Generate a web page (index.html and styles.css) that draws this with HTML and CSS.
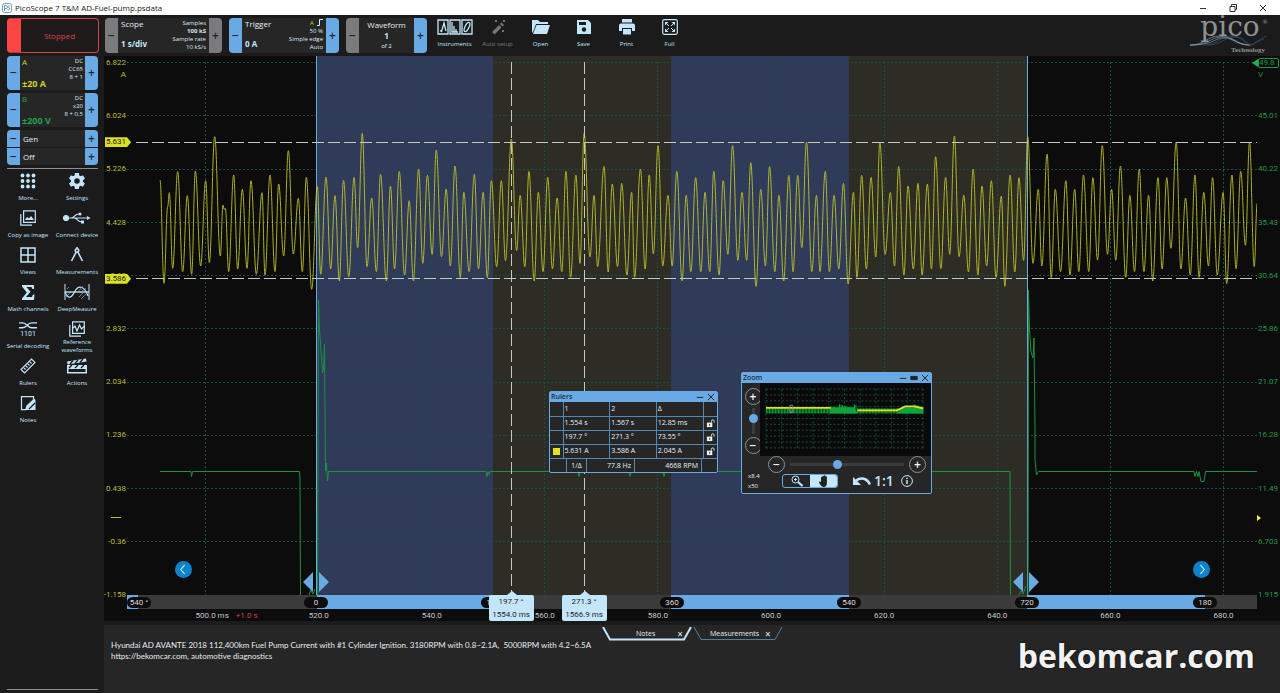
FILE: index.html
```html
<!DOCTYPE html>
<html lang="en">
<head>
    <meta charset="UTF-8">
    <meta name="viewport" content="width=device-width, initial-scale=1.0">
    <title>PicoScope 7 T&amp;M AD-Fuel-pump.psdata</title>
    <link rel="stylesheet" href="styles.css">
</head>
<body>
    <header class="titlebar">
        <svg class="app-icon" viewBox="0 0 12 12" fill="none" stroke="#6f9fc0"><rect x="1.5" y="1.5" width="9" height="9" rx="2"/><path d="M3.5 9V3.500h1.500a1.500 1.500 0 0 1 0 3H3.500M9 4c-2-1-2.500 1-1 1.700s1 2.800-1.500 1.800"/></svg>
        <span class="title">PicoScope 7 T&amp;M AD-Fuel-pump.psdata</span>
        <div class="window-buttons">
            <button aria-label="Minimize"><svg viewBox="0 0 10 10"><path d="M2 5.500h6"/></svg></button>
            <button aria-label="Restore"><svg viewBox="0 0 10 10"><path d="M2 3.500h5v5H2zM3.500 3.500v-2h5v5H7"/></svg></button>
            <button aria-label="Close"><svg viewBox="0 0 10 10"><path d="M2 2l6 6M8 2l-6 6"/></svg></button>
        </div>
    </header>

    <div class="topbar">
        <button class="stopped"><span>Stopped</span></button>
        <div class="card scope">
            <button class="step grey" aria-label="Less time">−</button>
            <div class="card-body">
                <div class="card-main"><span>Scope</span><b>1 s/div</b></div>
                <div class="card-side">Samples<br><b>100 kS</b><br>Sample rate<br>10 kS/s</div>
            </div>
            <button class="step grey" aria-label="More time">+</button>
        </div>
        <div class="card trigger">
            <button class="step" aria-label="Lower trigger">−</button>
            <div class="card-body">
                <div class="card-main"><span>Trigger</span><b>0 A</b></div>
                <div class="card-side"><span class="yellow">A</span> &nbsp;<svg class="edge" viewBox="0 0 6 7"><path d="M0 6.500h2.500v-6H6"/></svg><br>50 %<br>Simple edge<br>Auto</div>
            </div>
            <button class="step" aria-label="Raise trigger">+</button>
        </div>
        <div class="card waveform">
            <button class="step grey" aria-label="Previous waveform">−</button>
            <div class="card-body center"><span>Waveform</span><b>1</b><small>of 2</small></div>
            <button class="step" aria-label="Next waveform">+</button>
        </div>
        <nav class="top-tools">
            <button class="tool"><svg class="wide" viewBox="0 0 36 16"><g fill="none" stroke="#c4e6fb" stroke-width="1.300"><path d="M1 1h10v14H1zM13 1h10v14H13zM25 1h10v14H25z"/><path d="M3 11.500l1.500 1L7 4l2 8M15 3v10h6M17 13V7M19 13v-3"/><ellipse cx="30" cy="8" rx="2" ry="5" transform="rotate(25 30 8)"/></g></svg>Instruments</button>
            <button class="tool" disabled><svg viewBox="0 0 16 16"><path d="M2 13l7-7 2.500 2.500-7 7z" fill="#777"/><path d="M10 5l1.500-1.500L14 6l-1.500 1.500z" fill="#777"/><path d="M5 1l2 2m0-2L5 3M13 1l2 2m0-2l-2 2M12 11l2 2m0-2l-2 2" stroke="#777"/></svg>Auto setup</button>
            <button class="tool"><svg class="big" viewBox="0 0 18 16" fill="#c4e6fb"><path d="M0 14V1h6l2 2h8v2H4L1.500 12z"/><path d="M4.500 6H18l-3 9H1z"/></svg>Open</button>
            <button class="tool"><svg viewBox="0 0 16 16"><path d="M1 1h11l3 3v11H1z" fill="#c4e6fb"/><path d="M3 3h7v3H3z" fill="#1b1b1b"/><circle cx="8" cy="10.500" r="2.200" fill="#1b1b1b"/></svg>Save</button>
            <button class="tool"><svg viewBox="0 0 16 16" fill="#c4e6fb"><path d="M3 0h10v3.500H3zM2 4.500h12a2 2 0 0 1 2 2V12h-3V9H3v3H0V6.500a2 2 0 0 1 2-2z"/><path d="M4 10h8v5.500H4z"/></svg>Print</button>
            <button class="tool"><svg viewBox="0 0 16 16"><rect x=".7" y=".7" width="14.600" height="14.600" rx="1.500" fill="none" stroke="#c4e6fb" stroke-width="1.200"/><path d="M3 3h3.500L3 6.500zM13 3v3.500L9.500 3zM3 13V9.500L6.500 13zM13 13H9.500L13 9.500z" fill="#c4e6fb"/><path d="M4 4l3 3M12 4L9 7M4 12l3-3M12 12L9 9" stroke="#c4e6fb"/></svg>Full</button>
        </nav>
        <div class="logo">
            <span class="logo-name">pico</span><sup>®</sup>
            <svg class="logo-wave" viewBox="0 0 76 12" fill="none" preserveAspectRatio="none">
                <g stroke="#7f99ad" stroke-width=".7"><path d="M0 10c16 0 16-9 30-9s16 9 30 9"/><path d="M0 10c20 0 20-8 32-8s14 8 28 8"/><path d="M0 10c24 0 24-7 34-7s12 7 26 7"/></g>
                <g stroke="#35536c" stroke-width=".7"><path d="M14 10c14 0 16-9 28-9s16 9 18 9 6-3 16-9"/><path d="M18 10c14 0 16-8 26-8s12 8 16 8 6-3 14-6"/></g>
            </svg>
            <span class="logo-sub">Technology</span>
        </div>
    </div>

    <div class="workspace">
        <aside class="sidebar">
            <div class="card channel yellow">
                <button class="step" aria-label="A range down">−</button>
                <div class="card-body">
                    <div class="card-main"><span>A</span><b>±20 A</b></div>
                    <div class="card-side">DC<br>CC65<br>8 + 1</div>
                </div>
                <button class="step" aria-label="A range up">+</button>
            </div>
            <div class="card channel green">
                <button class="step" aria-label="B range down">−</button>
                <div class="card-body">
                    <div class="card-main"><span>B</span><b>±200 V</b></div>
                    <div class="card-side">DC<br>x20<br>8 + 0.5</div>
                </div>
                <button class="step" aria-label="B range up">+</button>
            </div>
            <div class="generator">
                <div class="card"><button class="step" aria-label="Previous generator">−</button><span class="card-body">Gen</span><button class="step" aria-label="Next generator">+</button></div>
                <div class="card"><button class="step" aria-label="Generator off">−</button><span class="card-body">Off</span><button class="step" aria-label="Generator on">+</button></div>
            </div>
            <nav class="side-tools">
                <button class="tool"><svg viewBox="0 0 16 16" fill="#c4e6fb"><circle cx="2.500" cy="2.500" r="1.900"/><circle cx="8" cy="2.500" r="1.900"/><circle cx="13.500" cy="2.500" r="1.900"/><circle cx="2.500" cy="8" r="1.900"/><circle cx="8" cy="8" r="1.900"/><circle cx="13.500" cy="8" r="1.900"/><circle cx="2.500" cy="13.500" r="1.900"/><circle cx="8" cy="13.500" r="1.900"/><circle cx="13.500" cy="13.500" r="1.900"/></svg>More...</button>
                <button class="tool"><svg viewBox="2 2 20 20" fill="#c4e6fb"><path d="M19.400 13c0-.3.100-.6.100-1s0-.7-.1-1l2.200-1.700c.2-.2.200-.4.100-.6l-2-3.500c-.1-.2-.4-.3-.6-.2l-2.600 1c-.5-.4-1.100-.7-1.700-1l-.4-2.700c0-.2-.2-.4-.5-.4h-4c-.2 0-.4.200-.5.400l-.4 2.700c-.6.300-1.200.6-1.700 1l-2.500-1c-.2-.1-.5 0-.6.200l-2 3.500c-.1.200-.1.500.1.600L4.500 11c0 .3-.1.700-.1 1s0 .7.100 1l-2.200 1.700c-.2.200-.2.400-.1.600l2 3.500c.1.200.4.300.6.200l2.500-1c.5.400 1.100.7 1.700 1l.4 2.700c0 .2.200.4.500.4h4c.2 0 .4-.2.500-.4l.4-2.700c.6-.3 1.200-.6 1.700-1l2.500 1c.2.100.5 0 .6-.2l2-3.500c.1-.2.100-.5-.1-.6zM12 15.500a3.500 3.500 0 1 1 0-7 3.500 3.500 0 0 1 0 7z"/></svg>Settings</button>
                <button class="tool"><svg viewBox="0 0 16 16" fill="none" stroke="#c4e6fb" stroke-width="1.200"><path d="M3.600.8h11.700v11.600H3.600zM.8 4v11.200H12"/><path d="M5 10l2-3 2 1.500L11 6l3 4z" fill="#c4e6fb" stroke="none"/></svg>Copy as image</button>
                <button class="tool"><svg class="usb" viewBox="0 0 28 14" fill="none" stroke="#c4e6fb" stroke-width="1.200"><path d="M4 7h20M8 7c4 0 3-4 8-4M11 7c4 0 3 4 8 4"/><circle cx="3" cy="7" r="2.500" fill="#c4e6fb"/><path d="M24 5l3.500 2L24 9z" fill="#c4e6fb" stroke="none"/><circle cx="17" cy="3" r="1.500" fill="#c4e6fb" stroke="none"/><path d="M18 9.500h3v3h-3z" fill="#c4e6fb" stroke="none"/></svg>Connect device</button>
                <button class="tool"><svg viewBox="0 0 16 16" fill="none" stroke="#c4e6fb" stroke-width="1.500"><path d="M1 1h14v14H1zM8 1v14M1 8h14"/></svg>Views</button>
                <button class="tool"><svg viewBox="0 0 16 16" fill="none" stroke="#c4e6fb" stroke-width="1.600"><path d="M7.200 5L2.500 14M8.800 5l4.700 9"/><circle cx="8" cy="3.500" r="1.700"/><path d="M8 0v2"/></svg>Measurements</button>
                <button class="tool"><svg viewBox="0 0 16 16"><path d="M2 1h12v4h-1.500l-1-2H6.500l4 4.700L6 13h6l1-2.500h1.500L14 16H2v-1.500L6.800 8.500 2 2.500z" fill="#c4e6fb"/></svg>Math channels</button>
                <button class="tool"><svg class="wide" viewBox="0 0 26 16" fill="none" stroke="#c4e6fb"><path d="M1 0v16M25 0v16"/><path d="M1 8h24" stroke-width="1.300"/><path d="M1 8c3 7 6 7 9.500 0S20 1 24 12" stroke-width="1.200"/><path d="M2 13l5-5M5 14l6-6M14 8l5-6M16 9l6-5M3 5l2-2M15 13l4-4M17 15l6-6" stroke-width=".5"/></svg>DeepMeasure</button>
                <button class="tool serial"><svg class="big" viewBox="0 0 20 9" fill="none" stroke="#c4e6fb" stroke-width="1.400"><path d="M0 1.500h4c5 0 5 5.500 10 5.500h6M0 7h4c5 0 5-5.500 10-5.500h6"/></svg><i>1101</i>Serial decoding</button>
                <button class="tool two-line"><svg viewBox="0 0 16 16" fill="none" stroke="#c4e6fb" stroke-width="1.200"><path d="M3.600.8h11.700v11.600H3.600zM.8 4v11.200H12"/><path d="M4 7l2-2 2 5 2.500-6 2 4 3-3"/></svg>Reference<br>waveforms</button>
                <button class="tool"><svg viewBox="0 0 16 16" fill="none" stroke="#c4e6fb" stroke-width="1.200"><path d="M1 11.500L11.500 1 15 4.500 4.500 15zM4 10l1.500 1.500M6 8l1.500 1.500M8 6l1.500 1.500M10 4l1.500 1.500"/></svg>Rulers</button>
                <button class="tool"><svg class="wide" viewBox="0 0 22 16"><path d="M1 3.500L20 .5l.5 3L1.500 6.500zM1 7h20v8.500H1z" fill="#c4e6fb"/><path d="M4 6l3-3.500M9 5.500L12 2M14 4.500L17 1M3 10l3-3M9 10l3-3M15 10l3-3" stroke="#1b1b1b" stroke-width="1.400"/><path d="M2.500 11h17v3h-17z" fill="#1b1b1b"/></svg>Actions</button>
                <button class="tool"><svg viewBox="0 0 16 16" fill="none" stroke="#c4e6fb" stroke-width="1.200"><path d="M13.500 4V1.600h-12v13h5"/><path d="M5 15l1.500-4.500L14 3.500l1.500 1.500V15z" fill="#c4e6fb" stroke="none"/><path d="M9 14l6-6" stroke="#1b1b1b"/></svg>Notes</button>
            </nav>
        </aside>

        <main class="plot">
            <div class="axis left" id="axis-a"></div>
            <div class="canvas">
                <svg class="traces" id="traces" viewBox="0 0 1130 539" preserveAspectRatio="none"></svg>
                <button class="round-nav prev" aria-label="Previous"><svg viewBox="0 0 10 10"><path d="M6 1L2.500 5 6 9"/></svg></button>
                <button class="round-nav next" aria-label="Next"><svg viewBox="0 0 10 10"><path d="M4 1l3.500 4L4 9"/></svg></button>
                <svg class="handle start" viewBox="0 0 26 20"><path d="M10 0v20L0 10zM16 0v20l10-10z"/></svg>
                <svg class="handle end" viewBox="0 0 26 20"><path d="M10 0v20L0 10zM16 0v20l10-10z"/></svg>
            </div>
            <div class="axis right" id="axis-b"></div>
            <div class="degrees" id="degrees"></div>
            <div class="times" id="times"></div>

            <section class="panel rulers">
                <div class="panel-head"><span>Rulers</span><button aria-label="Minimize rulers"><svg viewBox="0 0 10 10"><path d="M1 5.500h8"/></svg></button><button aria-label="Close rulers"><svg viewBox="0 0 10 10"><path d="M1 1l8 8M9 1L1 9"/></svg></button></div>
                <table>
                    <tr><th></th><th>1</th><th>2</th><th>Δ</th><th></th></tr>
                    <tr><td></td><td>1.554 s</td><td>1.567 s</td><td>12.85 ms</td><td class="lock"></td></tr>
                    <tr><td></td><td>197.7 °</td><td>271.3 °</td><td>73.55 °</td><td class="lock"></td></tr>
                    <tr><td><i class="swatch"></i></td><td>5.631 A</td><td>3.586 A</td><td>2.045 A</td><td class="lock"></td></tr>
                </table>
                <div class="inverse"><span>1/Δ</span><span>77.8 Hz</span><span>4668 RPM</span></div>
            </section>

            <section class="panel zoom">
                <div class="panel-head"><span>Zoom</span><button aria-label="Minimize zoom"><svg viewBox="0 0 10 10"><path d="M1 5.500h8"/></svg></button><button aria-label="Dock zoom"><svg viewBox="0 0 10 10"><path d="M1 3h8v4H1z" fill="#222"/></svg></button><button aria-label="Close zoom"><svg viewBox="0 0 10 10"><path d="M1 1l8 8M9 1L1 9"/></svg></button></div>
                <div class="zoom-body">
                    <div class="zoom-v">
                        <button class="ring" aria-label="Zoom in vertically">+</button>
                        <input type="range" class="vertical" aria-label="Vertical zoom" min="0" max="100" value="65">
                        <button class="ring" aria-label="Zoom out vertically">−</button>
                    </div>
                    <svg class="overview" id="overview" viewBox="0 0 172 72" preserveAspectRatio="none"></svg>
                </div>
                <div class="zoom-foot">
                    <div class="factors">x8.4<br>x50</div>
                    <div class="zoom-controls">
                        <div class="zoom-h">
                            <button class="ring" aria-label="Zoom out">−</button>
                            <input type="range" aria-label="Horizontal zoom" min="0" max="100" value="41">
                            <button class="ring" aria-label="Zoom in">+</button>
                        </div>
                        <div class="zoom-modes">
                            <div class="segmented">
                                <button aria-label="Marquee zoom"><svg viewBox="0 0 12 12" fill="none" stroke="#c4e6fb"><circle cx="4.500" cy="4.500" r="3.500"/><path d="M7 7l4.500 4" stroke-width="2"/><path d="M3 4.500h3M4.500 3v3"/></svg></button>
                                <button class="active" aria-label="Pan"><svg viewBox="0 0 12 12"><path d="M3 7V2.500a.7.700 0 0 1 1.400 0V1.500a.7.700 0 0 1 1.500 0V1a.7.700 0 0 1 1.500 0v1a.7.700 0 0 1 1.500 0V8c0 2-1 4-3 4S3 11 1 7.500C.5 6.500 2 6 3 7z" fill="#222"/></svg></button>
                            </div>
                            <button class="plain" aria-label="Undo zoom"><svg class="undo" viewBox="0 0 18 10"><path d="M3 4.500C8 1 14 2 17 8.500" fill="none" stroke="#c4e6fb" stroke-width="2.500"/><path d="M0 1v8h8z" fill="#c4e6fb"/></svg></button>
                            <button class="plain one">1:1</button>
                            <button class="plain" aria-label="Information"><svg class="info" viewBox="0 0 12 12" fill="none" stroke="#c4e6fb"><circle cx="6" cy="6" r="5.400"/><path d="M6 5v4M6 2.800v1.200" stroke-width="1.500"/></svg></button>
                        </div>
                    </div>
                </div>
            </section>
        </main>

        <section class="notes">
            <div class="tabs">
                <div class="tab active"><svg viewBox="0 0 90 14"><path d="M1 0l7 12.500h74L89 0"/></svg><button>Notes</button><button class="tab-close" aria-label="Close notes">×</button></div>
                <div class="tab"><svg viewBox="0 0 90 14"><path d="M1 0l7 12.500h74L89 0"/></svg><button>Measurements</button><button class="tab-close" aria-label="Close measurements">×</button></div>
            </div>
            <div class="notes-row">
                <p>Hyundai AD AVANTE 2018 112,400km Fuel Pump Current with #1 Cylinder Ignition. 3180RPM with 0.8~2.1A,&nbsp; 5000RPM with 4.2~6.5A<br>https://bekomcar.com, automotive diagnostics</p>
                <span class="watermark">bekomcar.com</span>
            </div>
        </section>
    </div>
    <script src="script.js"></script>
</body>
</html>
```
FILE: styles.css
```css
* { box-sizing: border-box; }
html, body { height: 100%; }
body { margin: 0; background: #1b1b1b; color: #e4eef4; font: 8px/10px "Open Sans", "Noto Sans", sans-serif; display: flex; flex-direction: column; overflow: hidden; }
button { font: inherit; color: inherit; background: none; border: 0; padding: 0; margin: 0; }
svg { display: block; }
.yellow { color: #d0d42a; }
.green { color: #22a04a; }

.titlebar { flex: none; height: 15px; background: #fff; color: #222; display: flex; align-items: center; padding-left: 1px; }
.app-icon { width: 12px; height: 12px; margin-right: 2px; }
.window-buttons { margin-left: auto; display: flex; padding-right: 2px; }
.window-buttons button { width: 30px; display: flex; justify-content: center; }
.window-buttons svg { width: 10px; height: 10px; fill: none; stroke: #333; stroke-width: 1; }

.topbar { flex: none; height: 41px; display: flex; align-items: flex-start; padding: 3px 10px 0 7px; }
.stopped { width: 92px; height: 35px; border: 1px solid #d84448; border-radius: 4px; background: #1e1a1a; color: #d84448; border-left: 14px solid #fb4444; margin-right: 6px; }
.card { display: flex; background: #262626; border-radius: 4px; overflow: hidden; }
.topbar .card { height: 35px; margin-right: 7px; }
.scope { width: 117px; }
.topbar .trigger { width: 110px; }
.waveform { width: 81px; }
.step { flex: none; width: 13px; background: #6aaae4; color: #1a2a3a; font-size: 12px; font-weight: 600; line-height: 12px; }
.step.grey { background: #7b7b7d; color: #222; }
.card-body { flex: 1; display: flex; justify-content: space-between; padding: 0 3px; }
.card-main { display: flex; flex-direction: column; justify-content: space-between; padding: 1px 0 4px; white-space: nowrap; }
.card-main b { font-size: 9px; }
.topbar .card-main b { font-size: 8px; color: #c4e6fb; }
.card-side { font-size: 6px; line-height: 8px; text-align: right; padding-top: 1px; white-space: nowrap; color: #dceaf2; }
.edge { display: inline-block; width: 6px; height: 7px; fill: none; stroke: #dceaf2; vertical-align: -1px; }
.card-body.center { flex-direction: column; align-items: center; padding: 2px 0; }
.center b { color: #c4e6fb; }
.center small { font-size: 6px; }
.tool { font-size: 6px; line-height: 8px; color: #c4e6fb; display: flex; flex-direction: column; align-items: center; white-space: nowrap; }
.tool svg { height: 16px; width: 16px; margin-bottom: 5px; }
.tool svg.wide { width: auto; }
.tool svg.big { width: 18px; }
.tool:disabled { color: #7c7c7c; }
.top-tools { display: flex; padding-top: 1px; margin-left: -1px; }
.top-tools .tool { width: 43px; }

.logo { margin-left: auto; width: 80px; height: 36px; position: relative; color: #8f9193; font-family: "DejaVu Serif", serif; text-align: center; }
.logo-name { font-size: 28px; line-height: 18px; }
.logo sup { font-size: 6px; position: absolute; right: 2px; top: 0; line-height: 8px; }
.logo-wave { position: absolute; left: 0; top: 17px; width: 76px; height: 12px; }
.logo-sub { position: absolute; right: 5px; bottom: 0; font: bold 7px/8px "Liberation Serif", serif; }

.workspace { flex: 1; min-height: 0; display: grid; grid-template-columns: 104px 1fr; grid-template-rows: 1fr 68px; }
.sidebar { grid-row: span 2; padding: 0 6px 3px 7px; display: flex; flex-direction: column; gap: 3px; }
.channel { height: 34px; }
.channel .card-body, .channel .card-side { padding-right: 1px; }
.channel .card-body { padding-left: 2px; }
.channel .card-main { padding-bottom: 1px; }
.generator { display: flex; flex-direction: column; gap: 1px; border-radius: 4px; overflow: hidden; }
.generator .card { height: 17px; border-radius: 0; align-items: stretch; }
.generator .card-body { align-items: center; }
.side-tools { flex: 1; border-top: 1px solid #909090; border-bottom: 1px solid #909090; display: grid; grid-template-columns: 49px 49px; grid-auto-rows: 37px; justify-content: center; padding-top: 4px; }
.side-tools .tool svg.usb { width: 28px; }
.side-tools .serial svg { height: 9px; margin-bottom: 0; }
.side-tools .two-line svg { margin-bottom: 1px; }
.serial i { font: 7px/8px Roboto, sans-serif; margin-bottom: 4px; }

.plot { position: relative; background: #0c0c0c; display: grid; grid-template-columns: 23px 1fr 23px; grid-template-rows: 1fr 14px 12px; border-bottom: 4px solid #1b1b1b; font: 8px/8px Roboto, sans-serif; }
.axis { position: relative; grid-row: 1; display: flex; flex-direction: column; justify-content: space-between; padding-top: 3px; margin-bottom: -4px; z-index: 1; }
.left { color: #b9bd35; align-items: flex-end; padding-right: 1px; }
.right { color: #1f9a46; padding-left: 1px; grid-column: 3; }
.axis .unit { position: absolute; top: 15px; }
.axis .flag { position: absolute; left: 1px; height: 10px; line-height: 10px; padding: 0 5px 0 1px; background: #dbe224; color: #222; transform: translateY(-5px); clip-path: polygon(0 0, 84% 0, 100% 50%, 84% 100%, 0 100%); }
.axis .boxed { border: 1px solid #1f9a46; border-radius: 2px; margin: -1px 1px -1px 0; }
.axis .boxed::before { content: ""; position: absolute; left: -5px; top: 3px; border: 4px solid transparent; border-right: 6px solid #22b04e; border-left: 0; }
.zero { position: absolute; top: 84%; }
.left .zero { left: 7px; width: 10px; height: 1px; background: #b9bd35; margin-top: 5px; }
.right .zero { left: 0; border: 3px solid transparent; border-left: 4px solid #f2f22c; border-right: 0; margin-top: 3px; }
.canvas { position: relative; grid-column: 2; min-height: 0; }
.traces { position: absolute; width: 100%; height: 100%; }
.traces path, .traces line { fill: none; vector-effect: non-scaling-stroke; }
.band-blue { fill: #303b59; }
.band-olive { fill: #2d2d26; }
.traces .grid { stroke: #1d4d4b; stroke-dasharray: 2 2; }
.traces .marker { stroke: #6aaae4; }
.traces .ruler { stroke: #c4c8c0; stroke-dasharray: 12 4; }
.traces .trace-a { stroke: #c8cc27; stroke-width: 1; opacity: .85; }
.traces .trace-b { stroke: #1c9140; }
.round-nav { position: absolute; bottom: 17px; width: 17px; height: 17px; border-radius: 50%; background: #0c84cc; display: flex; align-items: center; justify-content: center; }
.round-nav svg { width: 11px; height: 11px; fill: none; stroke: #d5ecfa; }
.prev { left: 48px; }
.next { right: 47px; }
.handle { position: absolute; bottom: 3px; width: 26px; height: 20px; fill: #6aaae4; transform: translateX(-13px); }
.handle.start { left: 16.7%; }
.handle.end { left: 79.6%; }
.degrees { grid-column: 2; position: relative; background: #3b3b3b; color: #ddd; }
.degrees .bar { position: absolute; top: 0; bottom: 0; background: #6aaae4; }
.degrees .pill { position: absolute; top: 2px; width: 24px; height: 11px; line-height: 11px; border-radius: 6px; background: #0c0c0c; text-align: center; transform: translateX(-12px); }
.times { grid-column: 2; position: relative; color: #c5c9cc; line-height: 12px; }
.times span { position: absolute; top: 1px; white-space: nowrap; transform: translateX(-10px); }
.times em { font-style: normal; color: #c94444; margin-left: 7px; }
.times .callout { top: -14px; width: 45px; height: 26px; line-height: 13px; background: #c4e6fb; color: #223; text-align: center; border-radius: 2px; transform: translateX(-23px); }
.callout::before { content: ""; position: absolute; left: 18px; top: -4px; border: 5px solid transparent; border-bottom: 4px solid #c4e6fb; border-top: 0; }

.panel { position: absolute; z-index: 2; background: #262626; border: 1px solid #6aaae4; border-radius: 2px; font: 7px/10px "Open Sans", sans-serif; color: #e8f2f8; }
.panel-head { height: 10px; background: #6aaae4; color: #1c2c3c; display: flex; align-items: center; font-weight: 600; padding: 0 1px; }
.panel-head span { flex: 1; }
.panel-head button { width: 11px; }
.panel-head svg { width: 8px; height: 8px; fill: none; stroke: #222; stroke-width: 1.2; margin: auto; }
.rulers { left: 445px; top: 335px; width: 169px; }
.rulers table { border-collapse: collapse; width: 100%; table-layout: fixed; }
.rulers th, .rulers td { border: 1px solid #5688b4; border-top: 0; height: 14px; padding: 0 1px; text-align: left; font-weight: 400; }
.rulers th:last-child, .rulers td:last-child { border-right: 0; width: 14px; }
.rulers th:first-child, .rulers td:first-child { border-left: 0; width: 13px; }
.swatch { display: block; width: 7px; height: 7px; background: #e2e222; margin: 0 auto; }
.lock svg { width: 9px; height: 9px; margin: auto; }
.inverse { display: flex; width: 136px; margin-left: 16px; border: 1px solid #5688b4; border-top: 0; border-bottom: 0; line-height: 13px; }
.inverse span { width: 48px; text-align: right; padding-right: 3px; border-left: 1px solid #5688b4; }
.inverse span:first-child { width: 19px; border: 0; text-align: center; padding: 0; }
.inverse span:last-child { flex: 1; }
.zoom { left: 637px; top: 316px; width: 191px; }
.zoom-body { display: flex; height: 73px; }
.zoom-v { width: 18px; flex: none; display: flex; flex-direction: column; align-items: center; justify-content: space-between; padding: 5px 0 2px; margin-left: 2px; }
.overview { flex: 1; min-width: 0; height: 73px; background: #0a0a0a; margin-left: -2px; }
.ring { flex: none; width: 17px; height: 17px; border: 1px solid #8b9298; border-radius: 50%; font-size: 12px; font-weight: 600; line-height: 14px; text-align: center; color: #fff; }
.zoom input { appearance: none; background: #3c3c3c; height: 3px; flex: 1; width: 0; min-width: 0; margin: 0 5px; }
.zoom input.vertical { writing-mode: vertical-lr; direction: rtl; width: 3px; height: auto; min-height: 0; margin: 3px 0; }
.zoom input::-webkit-slider-thumb { appearance: none; width: 9px; height: 9px; border-radius: 50%; background: #6aaae4; }
.zoom-foot { display: flex; height: 37px; }
.factors { width: 26px; flex: none; padding: 15px 0 0 6px; font-size: 6px; }
.zoom-controls { flex: 1; min-width: 0; padding-right: 5px; }
.zoom-h { display: flex; align-items: center; }
.zoom-modes { display: flex; align-items: center; padding-left: 14px; height: 16px; }
.segmented { display: flex; width: 56px; height: 14px; border: 1px solid #6aaae4; border-radius: 3px; overflow: hidden; margin-right: 15px; }
.segmented button { flex: 1; }
.segmented svg { width: 12px; height: 12px; margin: auto; }
.segmented .active { background: #c4e6fb; }
.undo { width: 18px; height: 10px; }
.plain.one { font-size: 14px; font-weight: 600; color: #c4e6fb; line-height: 14px; margin: 0 7px 0 3px; }
.info { width: 12px; height: 12px; }

.notes { background: #262626; position: relative; }
.tabs { display: flex; padding: 2px 0 0 498px; gap: 1px; font-size: 7px; }
.tab { position: relative; width: 90px; height: 14px; display: flex; padding-left: 17px; gap: 6px; }
.tab.active { padding-left: 34px; gap: 22px; }
.tab button { position: relative; }
.tab svg { position: absolute; left: 0; top: 0; width: 90px; height: 14px; fill: none; stroke: #50809f; }
.tab.active svg { stroke: #c4e6fb; stroke-width: 2; }
.tab-close { font-size: 10px; }
.notes-row { display: flex; justify-content: space-between; padding: 0 25px 0 7px; font-size: 8px; line-height: 11px; }
.notes p { margin: -1px 0 0; white-space: nowrap; font-family: Lato, "Open Sans", sans-serif; }
.watermark { font-size: 32px; font-weight: 700; line-height: 30px; color: #f2f2f2; text-shadow: 0 0 2px #000; }
```
FILE: script.js
```js
// full-scale readings for both axes, top to bottom
var axisA = ['6.822', '6.024', '5.226', '4.428', '3.63', '2.832', '2.034', '1.236', '0.438', '-0.36', '-1.158'];
var axisB = ['49.8', '45.01', '40.22', '35.43', '30.64', '25.86', '21.07', '16.28', '11.49', '6.703', '1.915'];

var current = [
    { x: -27, y: 44, sx: 1 / 3, pts: '180,240 192,550 203,320 208,278 218,505 233,215 248,515 262,287 275,523 286,213 302,498 317,242 328,488 344,110 361,468 369,315 372,328 376,325 386,515 401,225 413,507 427,268 441,505 453,242 469,523 486,278 495,525 510,225 525,515 536,252 551,468 565,152 580,462 595,295 607,515 619,232 635,568 652,260 662,523 678,232 692,507 705,287 718,543' },
    { x: 213, y: 64, sx: 0.5868, pts: '6,181 15,470 24,172 30,383 38,40 46,440 54,234 62,455 69,163 79,483 86,198 93,447 101,154 110,465 118,242 125,483 134,147 141,430 149,166 157,403 164,90 173,410 181,207 188,438 196,138 205,473 211,217 220,455 229,163 236,447 244,217 251,473 258,182 267,440 275,182 282,422 292,57 301,392 307,226 315,440 322,154 331,483 338,217 346,455 354,172 362,447 370,234 378,455 385,154 393,472 402,165 409,430 416,40 426,411 433,226 439,440 450,139 457,456 464,192 473,440 480,190 489,465 497,217 502,472 512,147 520,447 527,165 534,402 542,77 550,438 559,226 566,438 574,154 583,483 590,226 598,455 606,173 615,455 622,217 630,455 637,154 646,465 653,182 661,403 669,77 678,421 685,217 693,421 700,128 709,499 717,208 725,438 732,140 741,455 748,226 756,483 765,166 772,455 780,166 787,383 795,66 804,455 812,226 818,455 827,154 834,455 842,226 850,447 858,190 866,492 875,217 881,472 889,166 897,447 905,172 913,411 920,66 929,403 938,217 945,438 952,139 961,465 968,198 977,447 985,190 992,465 1001,192 1008,447 1015,110 1024,446 1032,172 1039,403 1047,48 1055,410 1063,226 1071,456 1079,147 1087,465 1094,198 1102,438 1110,182 1118,472 1127,228 1133,499 1142,165 1150,456 1157,173 1165,421 1172,50 1181,430 1190,208 1196,438 1205,102 1212,473 1219,208 1228,455 1237,182 1244,465 1252,208 1259,455 1267,165 1276,455 1283,173 1291,420 1299,77 1308,403 1315,208 1322,421 1330,138 1339,472 1346,226 1354,455 1362,147 1370,455 1378,226 1385,483 1394,173 1401,447 1409,173 1416,385 1425,66 1433,447 1441,234 1449,465 1457,165 1464,472 1472,217 1480,438 1487,173 1495,465 1505,217 1511,491 1520,165 1527,446 1535,154 1543,376 1550,66 1558,440 1563,250' }
];

function currentPath() {
    var d = '', px, py;
    current.forEach(function (block) {
        block.pts.split(' ').forEach(function (pair) {
            var p = pair.split(',');
            var x = block.x + p[0] * block.sx;
            var y = block.y + p[1] / 3;
            if (!d) {
                d = 'M' + x + ' ' + y;
            } else {
                var k = (x - px) * 0.4;
                d += 'C' + [px + k, py, x - k, y, x, y].join(' ');
            }
            px = x;
            py = y;
        });
    });
    return d;
}

function line(cls, x1, y1, x2, y2) {
    return '<line class="' + cls + '" x1="' + x1 + '" y1="' + y1 + '" x2="' + x2 + '" y2="' + y2 + '"/>';
}

function drawTraces() {
    var s = '';
    [[189.5, 366, 'blue'], [366, 544, 'olive'], [544, 722, 'blue'], [722, 900.5, 'olive']].forEach(function (b) {
        s += '<rect class="band-' + b[2] + '" x="' + b[0] + '" y="0" width="' + (b[1] - b[0]) + '" height="539"/>';
    });
    for (var i = 0; i < 10; i++) {
        s += line('grid', 0, Math.round(6 + i * 53.25) + 0.5, 1130, Math.round(6 + i * 53.25) + 0.5);
        s += line('grid', Math.round(78 + i * 113.1) + 0.5, 6, Math.round(78 + i * 113.1) + 0.5, 539);
    }
    s += line('marker', 189.5, 0, 189.5, 539) + line('marker', 900.5, 0, 900.5, 539);
    s += '<path class="trace-b" d="M33 415.500H64l.5 5 1-5H172.500l.5 8 .5 115.500M182 539l2-5 2 4 2-5M190.500 539L191.500 244l1 30 3 43 1-4 1-25 1 127 1-8 1 18 1-9.500H359l1 5 1-5 1 3 1-3H451l1 5 1-5H502l1 5 1-5H536l1 5 1-5H883l.5 123.500M892 539l2-4 2 3 3-8M901 539L901.500 234l1 40 1.500 22 2 6 1-20 1 92v30l1.500 15 2-3.500H1067l1 5 1.500-5 1.500 5 1-5 2 10h3l1.500-10H1130"/>';
    s += '<path class="trace-a" d="' + currentPath() + '"/>';
    s += line('ruler', 9, 86.5, 1130, 86.5) + line('ruler', 9, 222.5, 1130, 222.5);
    s += line('ruler', 384.5, 6, 384.5, 539) + line('ruler', 457.5, 6, 457.5, 539);
    document.getElementById('traces').innerHTML = s;
}

function drawAxes() {
    document.getElementById('axis-a').innerHTML = axisA.map(function (v) { return '<span>' + v + '</span>'; }).join('') +
        '<span class="unit">A</span><span class="flag" style="top:15.9%">5.631</span><span class="flag" style="top:41%">3.586</span><i class="zero"></i>';
    document.getElementById('axis-b').innerHTML = axisB.map(function (v, i) { return '<span' + (i ? '' : ' class="boxed"') + '>' + v + '</span>'; }).join('') +
        '<span class="unit">V</span><i class="zero"></i>';

    var pct = function (x) { return (x / 11.3).toFixed(2) + '%'; };
    var deg = '';
    [[0, 11], [189.5, 366], [544, 722], [900.5, 1078]].forEach(function (b) {
        deg += '<div class="bar" style="left:' + pct(b[0]) + ';width:' + pct(b[1] - b[0]) + '"></div>';
    });
    [[12, '540 °'], [189, '0'], [366, '180'], [545, '360'], [722, '540'], [900, '720'], [1078, '180']].forEach(function (p) {
        deg += '<span class="pill" style="left:' + pct(p[0]) + '">' + p[1] + '</span>';
    });
    document.getElementById('degrees').innerHTML = deg;

    var t = '';
    ['500.0 ms<em>+1.0 s</em>', '520.0', '540.0', '560.0', '580.0', '600.0', '620.0', '640.0', '660.0', '680.0'].forEach(function (v, i) {
        t += '<span style="left:' + pct(78.5 + i * 113.1) + '">' + v + '</span>';
    });
    t += '<span class="callout" style="left:' + pct(384.5) + '">197.7 °<br>1554.0 ms</span>';
    t += '<span class="callout" style="left:' + pct(457.5) + '">271.3 °<br>1566.9 ms</span>';
    document.getElementById('times').innerHTML = t;
}

function drawOverview() {
    var s = '<g stroke="#1d6a54" stroke-width=".7" stroke-dasharray="2 2">';
    for (var i = 0; i <= 10; i++) {
        s += line('', 6 + i * 15.8, 6, 6 + i * 15.8, 64) + line('', 6, 6 + i * 5.8, 164, 6 + i * 5.8);
    }
    s += '</g><g stroke="#0ea63a" stroke-width="1">';
    for (var x = 6.5; x < 165; x += 1.5) {
        var busy = (x > 70 && x < 98) || x > 145;
        var top = busy ? 21 + (x * 7 % 5) : 25;
        s += line('', x, top, x, 30);
    }
    s += '</g><path d="M70 24h25l3 6H70zM137 30l8-6h19v6z" fill="#0ea63a"/>';
    s += '<path d="M6 24.500h65M98 27h40l8-4h9l9 2" fill="none" stroke="#e2e222" stroke-width="1.800"/>';
    s += '<path d="M30 22h3v7h-3z" fill="none" stroke="#999" stroke-width=".8"/>';
    document.getElementById('overview').innerHTML = s;
}

drawTraces();
drawAxes();
drawOverview();
document.querySelectorAll('.lock').forEach(function (cell) {
    cell.innerHTML = '<svg viewBox="0 0 10 10"><path d="M1 4h6v5H1z" fill="#e8f2f8"/><path d="M6 4V2.500a1.500 1.500 0 0 1 3 0V4" fill="none" stroke="#e8f2f8"/><path d="M4 5.500v2" stroke="#262626"/></svg>';
});
```
